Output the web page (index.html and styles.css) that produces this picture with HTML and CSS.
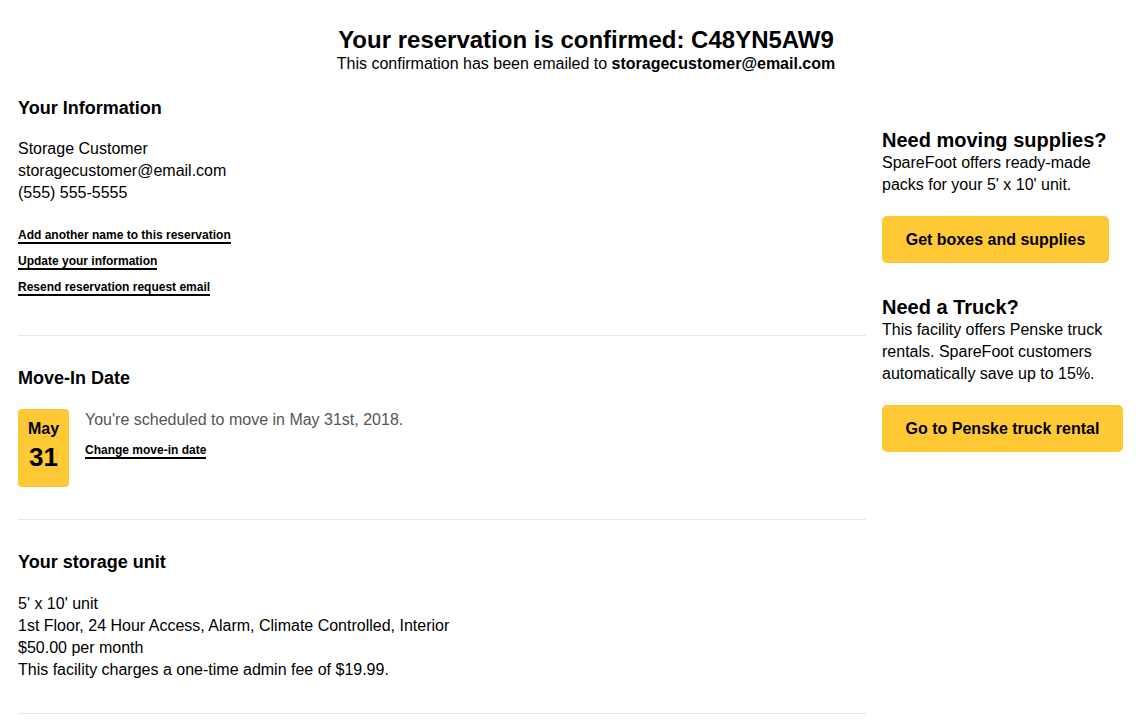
FILE: index.html
```html
<!DOCTYPE html>
<html>
<head>
<meta charset="utf-8">
<link rel="stylesheet" href="styles.css">
</head>
<body>
<header class="page-header">
  <h1 class="title">Your reservation is confirmed: C48YN5AW9</h1>
  <p class="subtitle">This confirmation has been emailed to <strong>storagecustomer@email.com</strong></p>
</header>
<div class="layout">
  <main class="main">
    <section class="section section-info">
      <h2 class="section-title">Your Information</h2>
      <div class="lines">
        <div>Storage Customer</div>
        <div>storagecustomer@email.com</div>
        <div>(555) 555-5555</div>
      </div>
      <div class="links">
        <a class="link" href="#">Add another name to this reservation</a>
        <a class="link" href="#">Update your information</a>
        <a class="link" href="#">Resend reservation request email</a>
      </div>
    </section>
    <section class="section section-date">
      <h2 class="section-title">Move-In Date</h2>
      <div class="date-row">
        <div class="date-box">
          <div class="date-month">May</div>
          <div class="date-day">31</div>
        </div>
        <div class="date-info">
          <div class="date-text">You're scheduled to move in May 31st, 2018.</div>
          <a class="link" href="#">Change move-in date</a>
        </div>
      </div>
    </section>
    <section class="section section-unit">
      <h2 class="section-title">Your storage unit</h2>
      <div class="lines">
        <div>5' x 10' unit</div>
        <div>1st Floor, 24 Hour Access, Alarm, Climate Controlled, Interior</div>
        <div>$50.00 per month</div>
        <div>This facility charges a one-time admin fee of $19.99.</div>
      </div>
    </section>
  </main>
  <aside class="aside">
    <div class="promo">
      <h3 class="promo-title">Need moving supplies?</h3>
      <p class="promo-text">SpareFoot offers ready-made<br>packs for your 5' x 10' unit.</p>
      <a class="btn btn-supplies" href="#">Get boxes and supplies</a>
    </div>
    <div class="promo promo-truck">
      <h3 class="promo-title">Need a Truck?</h3>
      <p class="promo-text">This facility offers Penske truck<br>rentals. SpareFoot customers<br>automatically save up to 15%.</p>
      <a class="btn btn-truck" href="#">Go to Penske truck rental</a>
    </div>
  </aside>
</div>
</body>
</html>
```
FILE: styles.css
```css
* { box-sizing: border-box; }
html, body { margin: 0; padding: 0; background: #fff; }
body {
  font-family: "Liberation Sans", Arial, sans-serif;
  color: #000;
  font-size: 16px;
  line-height: 22px;
}
.page-header {
  text-align: center;
  padding: 26px 0 0 25px;
}
.title {
  margin: 0;
  font-size: 24px;
  line-height: 28px;
  font-weight: bold;
}
.subtitle {
  margin: 0;
  font-size: 16px;
  line-height: 20px;
}
.layout {
  display: flex;
  padding: 0 18px;
}
.main { width: 848px; flex: none; }
.aside { margin-left: 16px; width: 245px; flex: none; padding-top: 55px; }
.section {
  border-bottom: 1px solid #e6e6e6;
}
.section-info { padding: 23px 0 39px; }
.section-date { padding: 31px 0 32px; }
.section-unit { padding: 31px 0 32px; }
.section-title {
  margin: 0;
  font-size: 18px;
  line-height: 22px;
  font-weight: bold;
}
.lines { margin-top: 19px; }
.section-unit .lines { margin-top: 20px; }
.links {
  margin-top: 24px;
  display: flex;
  flex-direction: column;
  align-items: flex-start;
  gap: 10px;
}
.link {
  display: inline-block;
  color: #000;
  text-decoration: none;
  font-size: 12px;
  line-height: 14px;
  font-weight: bold;
  border-bottom: 2px solid #000;
}
.date-row {
  display: flex;
  margin-top: 20px;
  gap: 16px;
}
.date-box {
  width: 51px;
  height: 78px;
  background: #ffc935;
  border-radius: 4px;
  text-align: center;
  font-weight: bold;
  padding-top: 9px;
}
.date-month { font-size: 16px; line-height: 22px; }
.date-day { font-size: 26px; line-height: 32px; margin-top: 1px; }
.date-info {
  display: flex;
  flex-direction: column;
  align-items: flex-start;
}
.date-text { color: #555; margin-bottom: 12px; }
.promo-title {
  margin: 0;
  font-size: 20px;
  line-height: 22px;
  font-weight: bold;
}
.promo-text { margin: 0; padding-top: 1px; }
.btn {
  display: inline-block;
  margin-top: 20px;
  background: #ffc935;
  color: #000;
  text-decoration: none;
  font-weight: bold;
  font-size: 16px;
  line-height: 47px;
  height: 47px;
  border-radius: 5px;
  text-align: center;
}
.btn-supplies { width: 227px; }
.btn-truck { width: 241px; }
.promo-truck { margin-top: 33px; }
```
